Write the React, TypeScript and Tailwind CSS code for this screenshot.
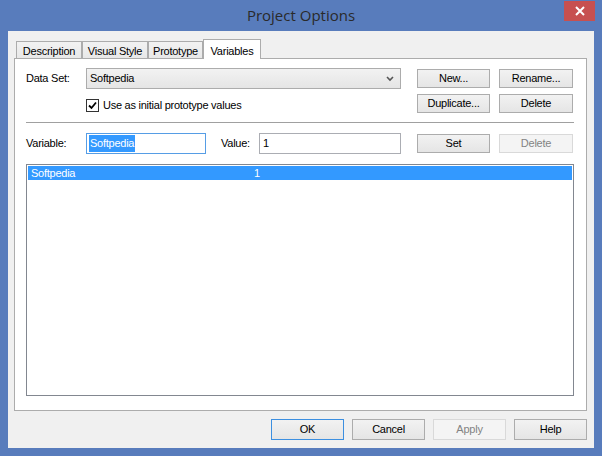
import React from "react";

const ui = "font-['Liberation_Sans',Arial,sans-serif] text-[11px] tracking-[-0.25px] text-black";

function Btn({
  label,
  disabled,
  focused,
  className = "",
}: {
  label: string;
  disabled?: boolean;
  focused?: boolean;
  className?: string;
}) {
  const look = disabled
    ? "bg-[#f4f4f4] border-[#d9d9d9] text-[#838383]"
    : focused
    ? "bg-linear-to-b from-[#f2f2f2] to-[#e5e5e5] border-[#3c8fe0] text-black"
    : "bg-linear-to-b from-[#f2f2f2] to-[#e5e5e5] border-[#acacac] text-black";
  return (
    <div
      className={`flex items-center justify-center border box-border leading-none ${look} ${className}`}
    >
      {label}
    </div>
  );
}

const tabs = ["Description", "Visual Style", "Prototype", "Variables"];
const tabWidths = ["w-[66px]", "w-[66px]", "w-[55px]", "w-[58px]"];

export default function App() {
  return (
    <div className={`w-[602px] h-[456px] bg-[#587cbc] flex flex-col ${ui}`}>
      {/* Title bar */}
      <div className="relative h-[31px] flex items-center justify-center">
        <span className="font-['Open_Sans',sans-serif] text-[15px] tracking-normal text-[#2a2a2a] -mt-[1px]">
          Project Options
        </span>
        <div className="absolute top-[1px] right-[7px] w-[31px] h-[20px] bg-[#c75050] flex items-center justify-center">
          <svg width="10" height="10" viewBox="0 0 10 10">
            <path d="M1 1 L9 9 M9 1 L1 9" stroke="white" strokeWidth="2" />
          </svg>
        </div>
      </div>

      {/* Client area */}
      <div className="ml-[8px] w-[586px] h-[417px] bg-[#f0f0f0] flex flex-col pt-[8px] pl-[6px]">
        {/* Tabs */}
        <div className="relative z-10 flex items-end h-[20px] -mb-[1px] pl-[2px]">
          {tabs.map((t, i) =>
            i === 3 ? (
              <div
                key={t}
                className={`${tabWidths[i]} h-[20px] bg-white border border-b-0 border-[#acacac] flex items-start justify-center pt-[3px]`}
              >
                {t}
              </div>
            ) : (
              <div
                key={t}
                className={`${tabWidths[i]} h-[17px] mb-[1px] bg-linear-to-b from-[#f2f2f2] to-[#e8e8e8] border border-b-0 border-[#acacac] flex items-center justify-center pt-[2px]`}
              >
                {t}
              </div>
            )
          )}
        </div>

        {/* Tab panel */}
        <div className="w-[573px] h-[353px] bg-white border border-[#acacac] box-border flex flex-col pt-[9px] pl-[11px]">
          {/* Data set row */}
          <div className="flex items-start h-[21px]">
            <div className="w-[60px] h-[21px] flex items-center">Data Set:</div>
            <div className="w-[315px] h-[21px] border border-[#acacac] bg-linear-to-b from-[#f2f2f2] to-[#e5e5e5] flex items-center justify-between pl-[3px] pr-[6px]">
              <span>Softpedia</span>
              <svg width="8" height="6" viewBox="0 0 8 6">
                <path d="M1 1 L4 4 L7 1" stroke="#555" strokeWidth="1.6" fill="none" />
              </svg>
            </div>
            <Btn label="New..." className="ml-[16px] mt-[1px] w-[73px] h-[19px]" />
            <Btn label="Rename..." className="ml-[9px] mt-[1px] w-[74px] h-[19px]" />
          </div>

          {/* Checkbox row */}
          <div className="flex items-start mt-[5px] h-[19px]">
            <div className="w-[60px]" />
            <div className="w-[315px] flex items-center gap-[4px] mt-[3px]">
              <div className="w-[13px] h-[13px] border border-[#333] bg-white flex items-center justify-center">
                <svg width="9" height="9" viewBox="0 0 9 9">
                  <path d="M1 4.5 L3.5 7 L8 1.5" stroke="black" strokeWidth="1.8" fill="none" />
                </svg>
              </div>
              <span>Use as initial prototype values</span>
            </div>
            <Btn label="Duplicate..." className="ml-[16px] w-[73px] h-[19px]" />
            <Btn label="Delete" className="ml-[9px] w-[74px] h-[19px]" />
          </div>

          {/* Separator */}
          <div className="mt-[9px] w-[548px] h-[2px] border-t border-[#a0a0a0] border-b border-b-white" />

          {/* Variable row */}
          <div className="flex items-start mt-[9px] h-[21px]">
            <div className="w-[60px] h-[21px] flex items-center">Variable:</div>
            <div className="w-[120px] h-[21px] border border-[#569de5] bg-white flex items-center pl-[2px]">
              <span className="bg-[#3399ff] text-white px-[1px]">Softpedia</span>
            </div>
            <div className="ml-[15px] w-[38px] h-[21px] flex items-center">Value:</div>
            <div className="w-[142px] h-[21px] border border-[#abadb3] bg-white flex items-center pl-[3px]">
              1
            </div>
            <Btn label="Set" className="ml-[16px] mt-[1px] w-[73px] h-[19px]" />
            <Btn label="Delete" disabled className="ml-[9px] mt-[1px] w-[74px] h-[19px]" />
          </div>

          {/* List */}
          <div className="mt-[10px] w-[548px] h-[232px] border border-[#828790] bg-white p-[1px]">
            <div className="h-[14px] bg-[#3399ff] text-white flex items-center">
              <span className="w-[226px] pl-[3px]">Softpedia</span>
              <span>1</span>
            </div>
          </div>
        </div>

        {/* Dialog buttons */}
        <div className="flex justify-end gap-[8px] mt-[8px] pr-[7px]">
          <Btn label="OK" focused className="w-[73px] h-[21px]" />
          <Btn label="Cancel" className="w-[73px] h-[21px]" />
          <Btn label="Apply" disabled className="w-[73px] h-[21px]" />
          <Btn label="Help" className="w-[73px] h-[21px]" />
        </div>
      </div>
    </div>
  );
}
